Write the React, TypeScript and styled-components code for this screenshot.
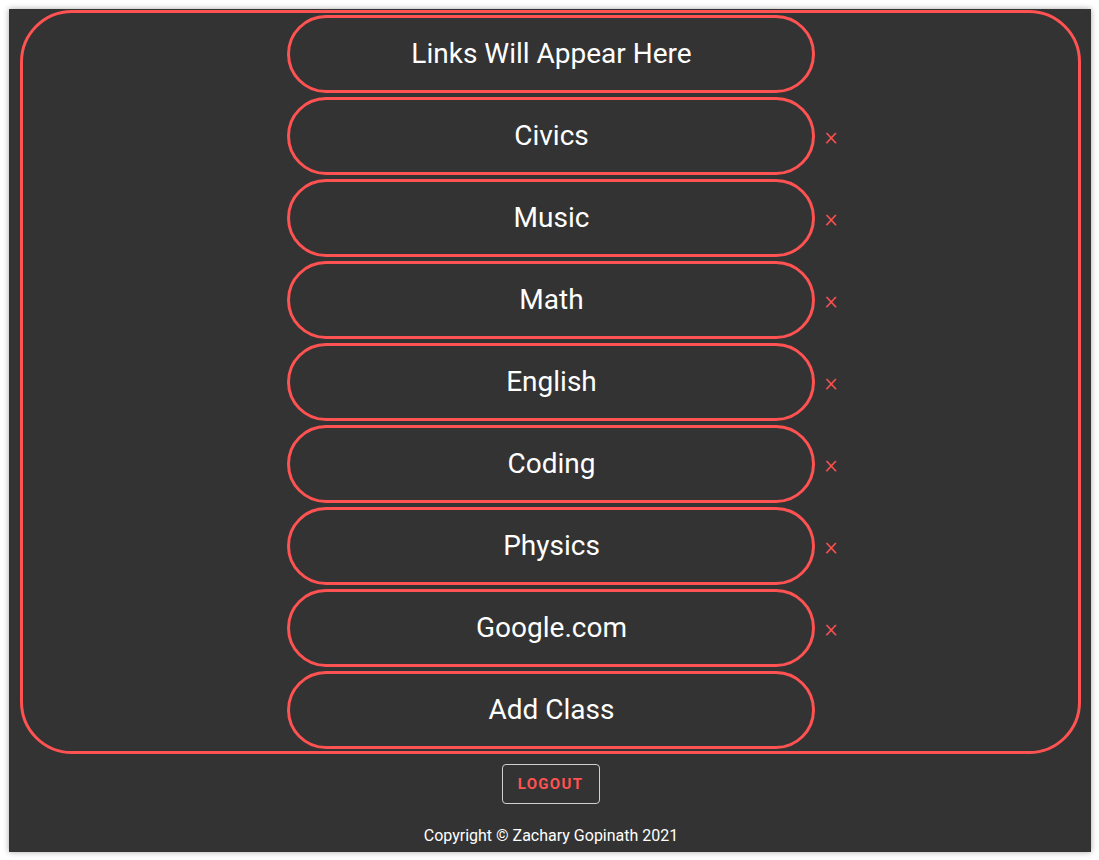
import React from "react";
import styled, { createGlobalStyle } from "styled-components";

const Global = createGlobalStyle`
  html, body { margin: 0; padding: 0; background: #ffffff; }
  body { font-family: Roboto, "Liberation Sans", sans-serif; }
  #root { padding: 9px; }
`;

const Page = styled.div`
  width: 1082px;
  height: 843px;
  background: #333333;
  box-shadow: 0 0 6px rgba(0, 0, 0, 0.35);
  display: flex;
  flex-direction: column;
  align-items: stretch;
  box-sizing: border-box;
  padding-top: 1px;
`;

const Panel = styled.div`
  margin: 0 10px 0 11px;
  border: 3px solid #ff5252;
  border-radius: 52px;
  display: flex;
  flex-direction: column;
  align-items: stretch;
`;

const Row = styled.div`
  display: grid;
  grid-template-columns: 1fr 528px 1fr;
  align-items: center;
  margin: 2px 0;
`;

const Pill = styled.div`
  grid-column: 2;
  height: 78px;
  box-sizing: border-box;
  border: 3px solid #ff5252;
  border-radius: 39px;
  display: flex;
  align-items: center;
  justify-content: center;
  padding: 0 0 2px 2px;
  color: #ffffff;
  font-size: 28px;
  font-family: Roboto, "Liberation Sans", sans-serif;
  cursor: pointer;
`;

const Remove = styled.span`
  grid-column: 3;
  justify-self: start;
  margin-left: 10px;
  color: #ff5252;
  font-size: 25px;
  font-weight: 300;
  line-height: 1;
  margin-top: 1px;
  cursor: pointer;
`;

const Footer = styled.div`
  display: flex;
  flex-direction: column;
  align-items: center;
  padding-top: 10px;
`;

const LogoutButton = styled.button`
  width: 98px;
  height: 40px;
  margin-left: 1px;
  background: transparent;
  border: 1px solid #d0d0d0;
  border-radius: 4px;
  color: #ff5252;
  font-family: Roboto, "Liberation Sans", sans-serif;
  font-weight: 700;
  font-size: 15px;
  letter-spacing: 1.3px;
  text-transform: uppercase;
  cursor: pointer;
`;

const Copyright = styled.p`
  margin: 22px 0 0 0;
  color: #ffffff;
  font-size: 16px;
  font-family: Roboto, "Liberation Sans", sans-serif;
  padding-left: 2px;
`;

const classes = ["Civics", "Music", "Math", "English", "Coding", "Physics", "Google.com"];

export default function App() {
  return (
    <>
      <Global />
      <Page>
        <Panel>
          <Row>
            <Pill>Links Will Appear Here</Pill>
          </Row>
          {classes.map((c) => (
            <Row key={c}>
              <Pill>{c}</Pill>
              <Remove>×</Remove>
            </Row>
          ))}
          <Row>
            <Pill>Add Class</Pill>
          </Row>
        </Panel>
        <Footer>
          <LogoutButton>Logout</LogoutButton>
          <Copyright>Copyright © Zachary Gopinath 2021</Copyright>
        </Footer>
      </Page>
    </>
  );
}
